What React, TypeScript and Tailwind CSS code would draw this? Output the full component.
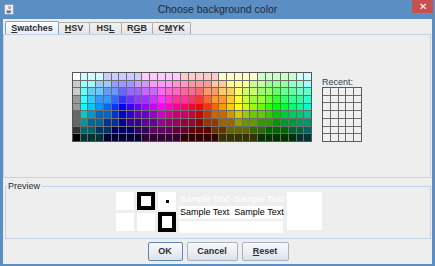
import React from 'react'

const FONT = "font-['Liberation_Sans',Arial,sans-serif]"

// 31 x 9 swatches, hue walks the columns, light to dark down the rows
const GRAYS = [255, 204, 204, 153, 153, 102, 102, 51, 0]
const ROWS: [number, number][] = [
  [0.2, 1], [0.4, 1], [0.6, 1], [0.8, 1], [1, 1], [1, 0.8], [1, 0.6], [1, 0.4], [1, 0.2],
]

function hsv(h: number, s: number, v: number) {
  const c = v * s
  const x = c * (1 - Math.abs(((h / 60) % 2) - 1))
  const m = v - c
  let r = 0, g = 0, b = 0
  if (h < 60) { r = c; g = x }
  else if (h < 120) { r = x; g = c }
  else if (h < 180) { g = c; b = x }
  else if (h < 240) { g = x; b = c }
  else if (h < 300) { r = x; b = c }
  else { r = c; b = x }
  const q = (n: number) => Math.round(((n + m) * 255) / 51) * 51
  return `rgb(${q(r)},${q(g)},${q(b)})`
}

function swatchColor(row: number, col: number) {
  if (col === 0) {
    const g = GRAYS[row]
    return `rgb(${g},${g},${g})`
  }
  const hue = (180 + (col - 1) * 12) % 360
  const [s, v] = ROWS[row]
  return hsv(hue, s, v)
}

const swatches: string[] = []
for (let r = 0; r < 9; r++) for (let c = 0; c < 31; c++) swatches.push(swatchColor(r, c))

function Tab({ label, mnemonic, width, selected }: { label: string; mnemonic: number; width: string; selected?: boolean }) {
  return (
    <div
      className={`${width} flex items-center justify-center text-[9px] font-bold leading-none text-[#2b2b2b] border border-b-0 rounded-t-[2px] ${
        selected
          ? 'h-[13px] border-[#7fa3cc] bg-gradient-to-b from-[#fbfdff] to-[#e6eef8] relative z-10'
          : 'h-[12px] -ml-px border-[#acacac] bg-gradient-to-b from-[#f3f3f3] to-[#e4e4e4]'
      }`}
    >
      {label.slice(0, mnemonic)}
      <span className="underline underline-offset-1">{label[mnemonic]}</span>
      {label.slice(mnemonic + 1)}
    </div>
  )
}

function Button({ children, width, focused }: { children: React.ReactNode; width: string; focused?: boolean }) {
  return (
    <button
      type="button"
      className={`${width} h-[19px] flex items-center justify-center rounded-[2px] border text-[9px] font-bold text-[#2d2d2d] bg-gradient-to-b from-[#f7f9fb] via-[#eceff3] to-[#dbe2ea] ${
        focused ? 'border-[#5f86b0]' : 'border-[#a5b3c3]'
      }`}
    >
      {children}
    </button>
  )
}

function JavaIcon() {
  return (
    <svg width="10" height="11" viewBox="0 0 10 11">
      <rect x="0.5" y="0.5" width="9" height="10" rx="1" fill="#e9eef5" stroke="#8aa0b8" />
      <path d="M5 2c-1 1 1 1.5 0 3M6.5 2.5c-.6.6.6 1 0 2" stroke="#d2452b" strokeWidth="0.9" fill="none" />
      <path d="M2.5 6.5h4.5v1.2c0 1-1 1.6-2.2 1.6S2.5 8.7 2.5 7.7z" fill="#4a78b0" />
    </svg>
  )
}

export default function App() {
  return (
    <div className={`w-[435px] h-[266px] bg-[#5b8ec3] flex flex-col ${FONT}`}>
      {/* title bar */}
      <div className="h-[19px] shrink-0 grid grid-cols-[1fr_auto_1fr]">
        <div className="pl-[4px] pt-[4px]">
          <JavaIcon />
        </div>
        <div className="pt-[3px] text-[10.5px] leading-[12px] text-[#1c2b3d]">Choose background color</div>
        <div className="flex justify-end pr-[2px]">
          <div className="w-[21px] h-[13px] bg-[#c75050] flex items-center justify-center text-white text-[10px] leading-none">
            ✕
          </div>
        </div>
      </div>

      <div className="flex-1 mx-[3px] mb-[2px] bg-[#eeeeee] flex flex-col">
        {/* tabs */}
        <div className="flex items-end pt-[2px] pl-[2px]">
          <Tab label="Swatches" mnemonic={0} width="w-[54px]" selected />
          <Tab label="HSV" mnemonic={0} width="w-[32px]" />
          <Tab label="HSL" mnemonic={2} width="w-[33px]" />
          <Tab label="RGB" mnemonic={1} width="w-[32px]" />
          <Tab label="CMYK" mnemonic={1} width="w-[39px]" />
        </div>

        {/* swatch panel */}
        <div className="h-[144px] mr-[1px] border border-[#c3d3e3] flex justify-center items-start pt-[37px]">
          <div className="flex items-end gap-[10px]">
            <div className="w-[240px] h-[70px] border border-[#555] bg-[#6e6e6e] grid grid-cols-[repeat(31,1fr)] grid-rows-[repeat(9,1fr)] gap-px">
              {swatches.map((c, i) => (
                <div key={i} style={{ backgroundColor: c }} />
              ))}
            </div>
            <div className="flex flex-col">
              <div className="text-[9px] leading-[10px] text-[#2b3f55]">Recent:</div>
              <div className="w-[40px] h-[55px] border border-[#5a5a5a] bg-[#6a6a6a] grid grid-cols-5 grid-rows-7 gap-px">
                {Array.from({ length: 35 }).map((_, i) => (
                  <div key={i} className="bg-[#f0f0f0]" />
                ))}
              </div>
            </div>
          </div>
        </div>

        {/* preview */}
        <fieldset className="mt-[3px] ml-[2px] mr-[1px] h-[58px] border border-[#c3d3e3]">
          <legend className="ml-[1px] px-[1px] text-[9px] leading-[10px] text-[#2b2b2b]">Preview</legend>
          <div className="flex justify-center items-start pt-[1px] gap-[3px] pl-[2px]">
            <div className="grid grid-cols-[18px_18px_18px] grid-rows-[18px_18px] gap-[3px]">
              <div className="bg-white" />
              <div className="bg-white border-[4px] border-black" />
              <div className="bg-white flex items-center justify-center">
                <div className="w-[3px] h-[3px] bg-black" />
              </div>
              <div className="bg-white" />
              <div className="bg-white" />
              <div className="bg-white border-[4px] border-black -my-px" />
            </div>
            <div className="w-[104px] flex flex-col text-[9px] leading-none whitespace-pre">
              <div className="h-[14px] flex items-center pl-[1px] text-white">Sample Text  Sample Text</div>
              <div className="h-[13px] flex items-center pl-[1px] bg-white text-black">Sample Text  Sample Text</div>
              <div className="h-[12px] mt-[2px] bg-white" />
            </div>
            <div className="w-[35px] h-[38px] ml-px bg-white" />
          </div>
        </fieldset>

        {/* buttons */}
        <div className="flex justify-center gap-[4px] mt-[3px] pl-[1px]">
          <Button width="w-[35px]" focused>OK</Button>
          <Button width="w-[51px]">Cancel</Button>
          <Button width="w-[47px]">
            <span className="underline underline-offset-1">R</span>eset
          </Button>
        </div>
      </div>
    </div>
  )
}
